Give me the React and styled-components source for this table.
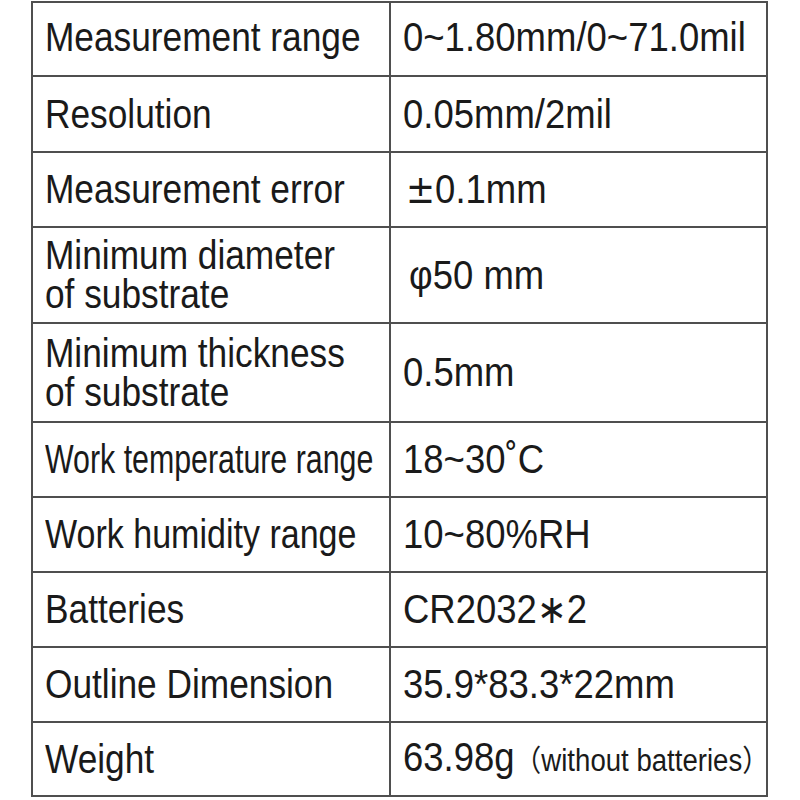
import React from "react";
import styled, { createGlobalStyle } from "styled-components";

const GlobalStyle = createGlobalStyle`
  html, body {
    margin: 0;
    padding: 0;
    background: #fff;
  }
  body {
    font-family: "Liberation Sans", Arial, sans-serif;
    color: #1a1a1a;
  }
`;

const Table = styled.div`
  margin: 1px 0 0 31px;
  width: 737px;
  border-top: 2px solid #4f4f4f;
  border-left: 2px solid #4f4f4f;
  box-sizing: border-box;
`;

const Row = styled.div`
  display: grid;
  grid-template-columns: 358px 377px;
  height: ${(p) => p.$h}px;
  box-sizing: border-box;
  border-bottom: 2px solid #4f4f4f;
`;

const Cell = styled.div`
  display: flex;
  align-items: center;
  padding-left: ${(p) => p.$pad || 12}px;
  border-right: 2px solid #4f4f4f;
  overflow: visible;
  min-width: 0;
`;

const Text = styled.span`
  display: flex;
  flex-direction: column;
  font-size: 41px;
  line-height: 39px;
  white-space: nowrap;
  transform: scaleX(${(p) => p.$squeeze || 0.86});
  transform-origin: left center;
  margin-top: ${(p) => p.$shift || 0}px;
`;

const Line = styled.span`
  display: block;
`;

const Small = styled.span`
  font-size: 31px;
`;

const Paren = styled.span`
  font-family: "Noto Sans CJK SC", sans-serif;
  font-size: 30px;
`;

const Glyph = styled.span`
  font-family: "DejaVu Sans", sans-serif;
  font-size: ${(p) => p.$size || 36}px;
`;

const rows = [
  { h: 74, label: ["Measurement range"], value: "0~1.80mm/0~71.0mil", shift: -4 },
  { h: 76, label: ["Resolution"], value: "0.05mm/2mil" },
  {
    h: 75,
    label: ["Measurement error"],
    value: (
      <>
        <Glyph $size={39}>±</Glyph>0.1mm
      </>
    ),
    vPad: 15,
  },
  {
    h: 96,
    label: ["Minimum diameter", "of substrate"],
    value: <>φ50 mm</>,
    vPad: 18,
  },
  { h: 99, label: ["Minimum thickness", "of substrate"], value: "0.5mm" },
  { h: 75, label: ["Work temperature range"], value: "18~30˚C", squeeze: 0.74 },
  { h: 75, label: ["Work humidity range"], value: "10~80%RH", squeeze: 0.83 },
  {
    h: 75,
    label: ["Batteries"],
    value: (
      <>
        CR2032<Glyph $size={40}>∗</Glyph>2
      </>
    ),
  },
  { h: 75, label: ["Outline Dimension"], value: "35.9*83.3*22mm" },
  {
    h: 74,
    label: ["Weight"],
    value: (
      <>
        63.98g<Paren>（</Paren>
        <Small>without batteries</Small>
        <Paren>）</Paren>
      </>
    ),
  },
];

export default function App() {
  return (
    <>
      <GlobalStyle />
      <Table>
        {rows.map((r, i) => (
          <Row key={i} $h={r.h}>
            <Cell>
              <Text $squeeze={r.squeeze} $shift={r.shift}>
                {r.label.map((line, j) => (
                  <Line key={j}>{line}</Line>
                ))}
              </Text>
            </Cell>
            <Cell $pad={r.vPad}>
              <Text $squeeze={0.89} $shift={r.shift}>
                <Line>{r.value}</Line>
              </Text>
            </Cell>
          </Row>
        ))}
      </Table>
    </>
  );
}
